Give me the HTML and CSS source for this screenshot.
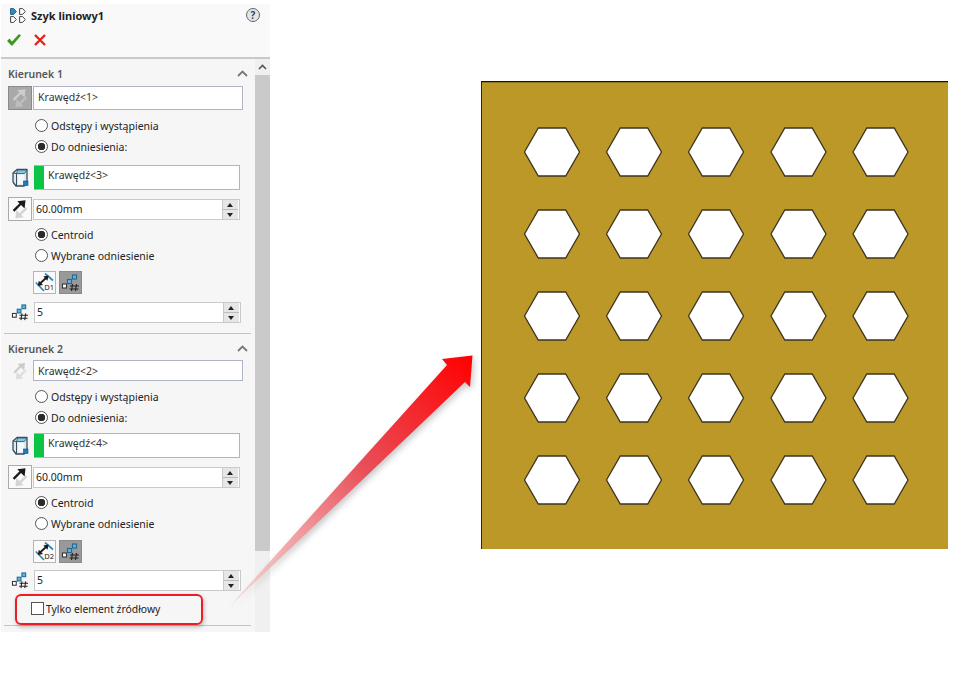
FILE: index.html
```html
<!DOCTYPE html>
<html lang="en">
<head>
    <meta charset="UTF-8">
    <meta name="viewport" content="width=device-width, initial-scale=1.0">
    <title>Szyk liniowy</title>
    <link rel="stylesheet" href="styles.css">
</head>
<body>
    <!-- shared icons -->
    <svg class="icon-defs" aria-hidden="true">
        <symbol id="icon-arrows" viewBox="0 0 24 24">
            <path d="M5 14 L13 6" class="arrow-a" stroke-width="2.600"/>
            <path d="M9 3.500 L18 2.500 L17 11.500 Z" class="arrow-a-fill"/>
            <path d="M19 11 L11 19" class="arrow-b" stroke-width="2.600"/>
            <path d="M16 21 L7 22 L8 13 Z" class="arrow-b-fill"/>
        </symbol>
        <symbol id="icon-cube" viewBox="0 0 18 20">
            <path d="M2 5 L6 1.500 H16 V14 L13 18 H5 L2 14 Z" fill="#dfe9ef" stroke="#3a4f5c" stroke-width="1.300" stroke-linejoin="round"/>
            <path d="M5.500 5.500 H13.500 L16 2 H6.500 Z" fill="#7ccbec" stroke="#3a4f5c" stroke-width=".8"/>
            <path d="M5.500 5.500 V18 M2 5 L5.500 5.500" fill="none" stroke="#3a4f5c"/>
            <rect x="7" y="7" width="6" height="9" fill="#f5f8fa"/>
            <rect x="12.500" y="13" width="4.500" height="4.500" fill="#1b7dc0" stroke="#0f4f7e" stroke-width=".6"/>
        </symbol>
        <symbol id="icon-count" viewBox="0 0 20 18">
            <rect x="1.500" y="10" width="4" height="4" fill="#fff" stroke="#333" stroke-width="1.100"/>
            <rect x="6.500" y="5.500" width="4" height="4" fill="#62b3dc" stroke="#1d6a97" stroke-width="1.100"/>
            <rect x="11.500" y="1" width="4" height="4" fill="#62b3dc" stroke="#1d6a97" stroke-width="1.100"/>
            <path d="M11.500 10 L10.500 17 M15.500 10 L14.500 17 M9 12 H18 M8.500 15 H17.500" fill="none" stroke="#222" stroke-width="1.100"/>
        </symbol>
        <symbol id="icon-spacing" viewBox="0 0 20 20">
            <path d="M10 .5 L18 7.500 M.8 9.500 L9 18" fill="none" stroke="#2b87bd" stroke-width="1.700"/>
            <path d="M5 10.500 L11 5" stroke="#1c1c1c" stroke-width="1.800"/>
            <path d="M2.800 13 L3.800 7.800 L8 12 Z M13.500 2.500 L12.500 7.700 L8.300 3.500 Z" fill="#1c1c1c"/>
        </symbol>
        <symbol id="icon-tile" viewBox="0 0 7 7">
            <path d="M.6 .6 H3.600 L6.300 3.500 L3.600 6.400 H.6 Z"/>
        </symbol>
    </svg>

    <aside class="panel">
        <header class="panel-head">
            <div class="title-row">
                <svg class="title-icon" width="16" height="15" viewBox="0 0 16 15">
                    <use href="#icon-tile" x="0" y="0" width="7" height="7" class="tile-blue"/>
                    <use href="#icon-tile" x="9" y="0" width="7" height="7" class="tile-line"/>
                    <use href="#icon-tile" x="0" y="8" width="7" height="7" class="tile-line"/>
                    <use href="#icon-tile" x="9" y="8" width="7" height="7" class="tile-line"/>
                </svg>
                <h1 class="title">Szyk liniowy1</h1>
                <span class="help">?</span>
            </div>
            <div class="confirm-row">
                <svg width="16" height="14" viewBox="0 0 16 14"><path d="M1 8 L3.500 5.500 L6 8.500 L13 1 L15 2.500 L6 13 Z" fill="#3d9a1f"/></svg>
                <svg width="14" height="14" viewBox="0 0 14 14"><path d="M2 2 L12 12 M12 2 L2 12" stroke="#e3241b" stroke-width="2.400"/></svg>
            </div>
        </header>

        <div class="panel-main">
            <div class="panel-body">
                <section class="group group-one">
                    <div class="group-head">
                        <span>Kierunek 1</span>
                        <svg class="chevron" width="11" height="7" viewBox="0 0 11 7"><path d="M1 6 L5.500 1.500 L10 6" fill="none" stroke="#777" stroke-width="1.800"/></svg>
                    </div>
                    <div class="row row-edge">
                        <span class="tool tool-grey"><svg width="22" height="22"><use href="#icon-arrows"/></svg></span>
                        <div class="field field-wide">Krawędź&lt;1&gt;</div>
                    </div>
                    <label class="radio first"><i class="dot"></i>Odstępy i wystąpienia</label>
                    <label class="radio"><i class="dot on"></i>Do odniesienia:</label>
                    <div class="row row-ref">
                        <svg class="side-icon" width="18" height="20"><use href="#icon-cube"/></svg>
                        <div class="field field-ref"><i class="swatch"></i>Krawędź&lt;3&gt;</div>
                    </div>
                    <div class="row row-dim">
                        <span class="tool tool-light"><svg width="22" height="22"><use href="#icon-arrows"/></svg></span>
                        <div class="spin-field">60.00mm<span class="spin"><b class="up"></b><b class="down"></b></span></div>
                    </div>
                    <label class="radio second"><i class="dot on"></i>Centroid</label>
                    <label class="radio"><i class="dot"></i>Wybrane odniesienie</label>
                    <div class="mode-row">
                        <span class="mode"><svg width="20" height="20"><use href="#icon-spacing"/></svg><em>D1</em></span>
                        <span class="mode active"><svg width="20" height="18"><use href="#icon-count"/></svg></span>
                    </div>
                    <div class="row row-count">
                        <svg class="side-icon" width="19" height="17"><use href="#icon-count"/></svg>
                        <div class="spin-field">5<span class="spin"><b class="up"></b><b class="down"></b></span></div>
                    </div>
                </section>

                <section class="group group-two">
                    <div class="group-head">
                        <span>Kierunek 2</span>
                        <svg class="chevron" width="11" height="7" viewBox="0 0 11 7"><path d="M1 6 L5.500 1.500 L10 6" fill="none" stroke="#777" stroke-width="1.800"/></svg>
                    </div>
                    <div class="row row-edge">
                        <span class="tool tool-plain"><svg width="20" height="20"><use href="#icon-arrows"/></svg></span>
                        <div class="field field-wide">Krawędź&lt;2&gt;</div>
                    </div>
                    <label class="radio first"><i class="dot"></i>Odstępy i wystąpienia</label>
                    <label class="radio"><i class="dot on"></i>Do odniesienia:</label>
                    <div class="row row-ref">
                        <svg class="side-icon" width="18" height="20"><use href="#icon-cube"/></svg>
                        <div class="field field-ref"><i class="swatch"></i>Krawędź&lt;4&gt;</div>
                    </div>
                    <div class="row row-dim">
                        <span class="tool tool-light"><svg width="22" height="22"><use href="#icon-arrows"/></svg></span>
                        <div class="spin-field">60.00mm<span class="spin"><b class="up"></b><b class="down"></b></span></div>
                    </div>
                    <label class="radio second"><i class="dot on"></i>Centroid</label>
                    <label class="radio"><i class="dot"></i>Wybrane odniesienie</label>
                    <div class="mode-row">
                        <span class="mode"><svg width="20" height="20"><use href="#icon-spacing"/></svg><em>D2</em></span>
                        <span class="mode active"><svg width="20" height="18"><use href="#icon-count"/></svg></span>
                    </div>
                    <div class="row row-count">
                        <svg class="side-icon" width="19" height="17"><use href="#icon-count"/></svg>
                        <div class="spin-field">5<span class="spin"><b class="up"></b><b class="down"></b></span></div>
                    </div>
                    <div class="seed-option">
                        <i class="check"></i>Tylko element źródłowy
                    </div>
                </section>
            </div>

            <div class="scrollbar">
                <div class="scroll-btn">
                    <svg width="9" height="6" viewBox="0 0 9 6"><path d="M1 5 L4.500 1.500 L8 5" fill="none" stroke="#555" stroke-width="1.600"/></svg>
                </div>
                <div class="scroll-thumb"></div>
            </div>
        </div>
    </aside>

    <svg class="plate" width="467" height="468" viewBox="481 81 467 468">
        <defs>
            <polygon id="hole" points="-27.500,0 -13.700,-24 13.700,-24 27.500,0 13.700,24 -13.700,24"/>
        </defs>
        <rect x="481" y="81" width="467" height="468" fill="#bb9827"/>
        <path d="M481 549 V81.500 H948" fill="none" stroke="#111" stroke-width="1.600"/>
        <g class="holes">
            <use href="#hole" x="552" y="152"/><use href="#hole" x="634" y="152"/><use href="#hole" x="716" y="152"/><use href="#hole" x="798.500" y="152"/><use href="#hole" x="880.500" y="152"/>
            <use href="#hole" x="552" y="234"/><use href="#hole" x="634" y="234"/><use href="#hole" x="716" y="234"/><use href="#hole" x="798.500" y="234"/><use href="#hole" x="880.500" y="234"/>
            <use href="#hole" x="552" y="316"/><use href="#hole" x="634" y="316"/><use href="#hole" x="716" y="316"/><use href="#hole" x="798.500" y="316"/><use href="#hole" x="880.500" y="316"/>
            <use href="#hole" x="552" y="398"/><use href="#hole" x="634" y="398"/><use href="#hole" x="716" y="398"/><use href="#hole" x="798.500" y="398"/><use href="#hole" x="880.500" y="398"/>
            <use href="#hole" x="552" y="480"/><use href="#hole" x="634" y="480"/><use href="#hole" x="716" y="480"/><use href="#hole" x="798.500" y="480"/><use href="#hole" x="880.500" y="480"/>
        </g>
    </svg>

    <!-- callout arrow lies over the panel and the page -->
    <svg class="callout" width="965" height="674" viewBox="0 0 965 674">
        <defs>
            <linearGradient id="arrow-fade" gradientUnits="userSpaceOnUse" x1="228" y1="608" x2="472" y2="356">
                <stop offset="0" stop-color="#f2a8a8" stop-opacity=".25"/>
                <stop offset=".3" stop-color="#f09a9c"/>
                <stop offset=".55" stop-color="#e8505a"/>
                <stop offset="1" stop-color="#ff0000"/>
            </linearGradient>
        </defs>
        <path d="M228 608 L447 365 L442 359 L472.500 355.500 L470 387 L465 382 Z" fill="url(#arrow-fade)"/>
    </svg>
</body>
</html>
```

FILE: styles.css
```css
html, body {
    margin: 0;
    padding: 0;
    height: 674px;
    overflow: hidden;
}
body {
    display: flex;
    align-items: flex-start;
    background-color: #fff;
    color: #222;
    font-family: "Noto Sans", "Open Sans", sans-serif;
    font-size: 10.5px;
    position: relative;
}
.icon-defs {
    width: 0;
    height: 0;
    position: absolute;
}
.arrow-a { fill: none; stroke: var(--arrow-a, #ccc); }
.arrow-a-fill { fill: var(--arrow-a, #ccc); }
.arrow-b { fill: none; stroke: var(--arrow-b, #ddd); }
.arrow-b-fill { fill: var(--arrow-b, #ddd); }

.panel {
    width: 269px;
    height: 628px;
    margin: 4px 0 0 1px;
    background-color: #f6f6f6;
    flex: none;
}
.panel-head {
    height: 53px;
    border-bottom: 2px solid #c9c9c9;
    background-color: #f9f9f9;
}
.title-row {
    display: flex;
    align-items: center;
    padding: 1px 9px 0 9px;
    height: 20px;
}
.title-icon { margin-right: 5px; flex: none; }
.tile-blue { fill: #2f8fc5; stroke: #1f5f8a; }
.tile-line { fill: #fff; stroke: #444; }
.title {
    margin: 0;
    font-size: 11px;
    font-weight: 700;
    color: #222;
    flex: 1;
}
.help {
    width: 12px;
    height: 12px;
    margin-right: 1px;
    border: 1.5px solid #666;
    border-radius: 50%;
    background-color: #dfe6ec;
    font-size: 10px;
    font-weight: 700;
    line-height: 12px;
    text-align: center;
    color: #444;
}
.confirm-row {
    display: flex;
    align-items: center;
    gap: 11px;
    padding: 8px 0 0 5px;
}

.panel-main {
    display: flex;
    height: 573px;
}
.panel-body {
    width: 247px;
    margin-left: 3px;
    flex: none;
}
.group {
    border-bottom: 1px solid #c4c4c4;
}
.group-one { height: 275px; box-sizing: border-box; }
.group-head {
    display: flex;
    justify-content: space-between;
    align-items: center;
    height: 15px;
    padding: 7px 3px 0 4px;
    font-weight: 600;
    font-size: 10.5px;
    color: #555;
}
.row {
    display: flex;
    align-items: center;
}
.tool {
    width: 24px;
    height: 24px;
    margin-left: 4px;
    display: flex;
    align-items: center;
    justify-content: center;
    box-sizing: border-box;
    flex: none;
}
.tool-grey {
    background-color: #a9a9a9;
    border: 1px solid #8a8a8a;
    --arrow-a: #cdcdcd;
    --arrow-b: #bdbdbd;
}
.tool-light {
    background-color: #fafafa;
    border: 1px solid #aaa;
    --arrow-a: #1a1a1a;
    --arrow-b: #d4d4d4;
}
.tool-plain { height: 21px; }

.field {
    box-sizing: border-box;
    background-color: #fff;
    border: 1px solid #aeb4c6;
    color: #333;
}
.field-wide {
    width: 210px;
    height: 24px;
    padding: 2px 0 0 4px;
    margin-left: 1px;
    line-height: 16px;
}
.group-two .field-wide { height: 21px; }
.row-edge { margin-top: 5px; }
.group-two .row-edge { margin-top: 4px; }

.radio {
    display: flex;
    align-items: center;
    height: 21px;
    padding-left: 31px;
    color: #222;
}
.radio.first { margin-top: 5px; }
.radio.second { margin-top: 3px; }
.dot {
    box-sizing: border-box;
    width: 13px;
    height: 13px;
    margin-right: 3px;
    border: 1px solid #555;
    border-radius: 50%;
    background-color: #fff;
    flex: none;
}
.dot.on {
    background: radial-gradient(circle, #2a2a2a 0 3.5px, #fff 4px);
}
.row-ref {
    margin-top: 8px;
}
.group-two .row-ref { margin-top: 5px; }
.side-icon {
    margin: 0 5px 0 7px;
    flex: none;
}
.field-ref {
    width: 206px;
    height: 25px;
    display: flex;
    align-items: flex-start;
    line-height: 16px;
    padding-top: 1px;
}
.swatch {
    width: 10px;
    height: 23px;
    margin: -1px 4px 0 -1px;
    background-color: #0bc443;
    flex: none;
}
.row-dim { margin-top: 7px; }
.spin-field {
    position: relative;
    box-sizing: border-box;
    width: 207px;
    height: 21px;
    margin-left: 1px;
    padding-left: 2px;
    line-height: 19px;
    font-size: 10.5px;
    color: #222;
    background-color: #fff;
    border: 1px solid #c9c9c9;
}
.spin {
    position: absolute;
    top: 0;
    right: 1px;
    width: 15px;
    height: 19px;
    background-color: #e6e6e6;
    border-left: 1px solid #c9c9c9;
}
.spin b {
    display: block;
    height: 9px;
    position: relative;
}
.spin .up { border-bottom: 1px solid #bbb; }
.spin b::after {
    content: "";
    position: absolute;
    left: 4px;
    border-left: 3px solid transparent;
    border-right: 3px solid transparent;
}
.spin .up::after { top: 3px; border-bottom: 4px solid #222; }
.spin .down::after { top: 3px; border-top: 4px solid #222; }

.mode-row {
    display: flex;
    gap: 3px;
    margin: 5px 0 0 29px;
}
.group-two .mode-row { margin-top: 6px; }
.mode {
    position: relative;
    box-sizing: border-box;
    width: 23px;
    height: 23px;
    display: flex;
    align-items: center;
    justify-content: center;
    background-color: #fafafa;
    border: 1px solid #b5b5b5;
}
.mode em {
    position: absolute;
    right: 1px;
    bottom: 1px;
    font-size: 7.5px;
    line-height: 9px;
    font-style: normal;
    color: #222;
}
.mode.active {
    background-color: #999;
    border-color: #8a8a8a;
}
.row-count { margin-top: 8px; }
.group-two .row-count { margin-top: 7px; }
.row-count .side-icon { margin: 0 4px 0 7px; }
.row-count .spin-field { margin-left: 0; }

/* red marking round the option, part of the reference */
.seed-option {
    display: flex;
    align-items: center;
    box-sizing: border-box;
    width: 188px;
    height: 31px;
    margin: 3px 0 0 11px;
    padding: 0 0 2px 14px;
    border: 2px solid #ee1c25;
    border-radius: 6px;
    box-shadow: 1px 2px 4px rgba(0,0,0,.25);
    font-size: 10.35px;
    color: #222;
}
.check {
    box-sizing: border-box;
    width: 13px;
    height: 13px;
    margin-right: 2px;
    background-color: #fff;
    border: 1px solid #555;
}

.scrollbar {
    width: 15px;
    margin-left: 4px;
    background-color: #f0f0f0;
    flex: none;
}
.scroll-btn {
    height: 16px;
    display: flex;
    align-items: center;
    justify-content: center;
}
.scroll-thumb {
    height: 476px;
    background-color: #cacaca;
}

.plate {
    margin: 81px 0 0 211px;
    flex: none;
}
.holes {
    fill: #fff;
    stroke: #3d3420;
    stroke-width: 1.3;
}
.callout {
    position: absolute;
    left: 0;
    top: 0;
    pointer-events: none;
    filter: drop-shadow(2px 3px 3px rgba(0,0,0,.22));
}
```
